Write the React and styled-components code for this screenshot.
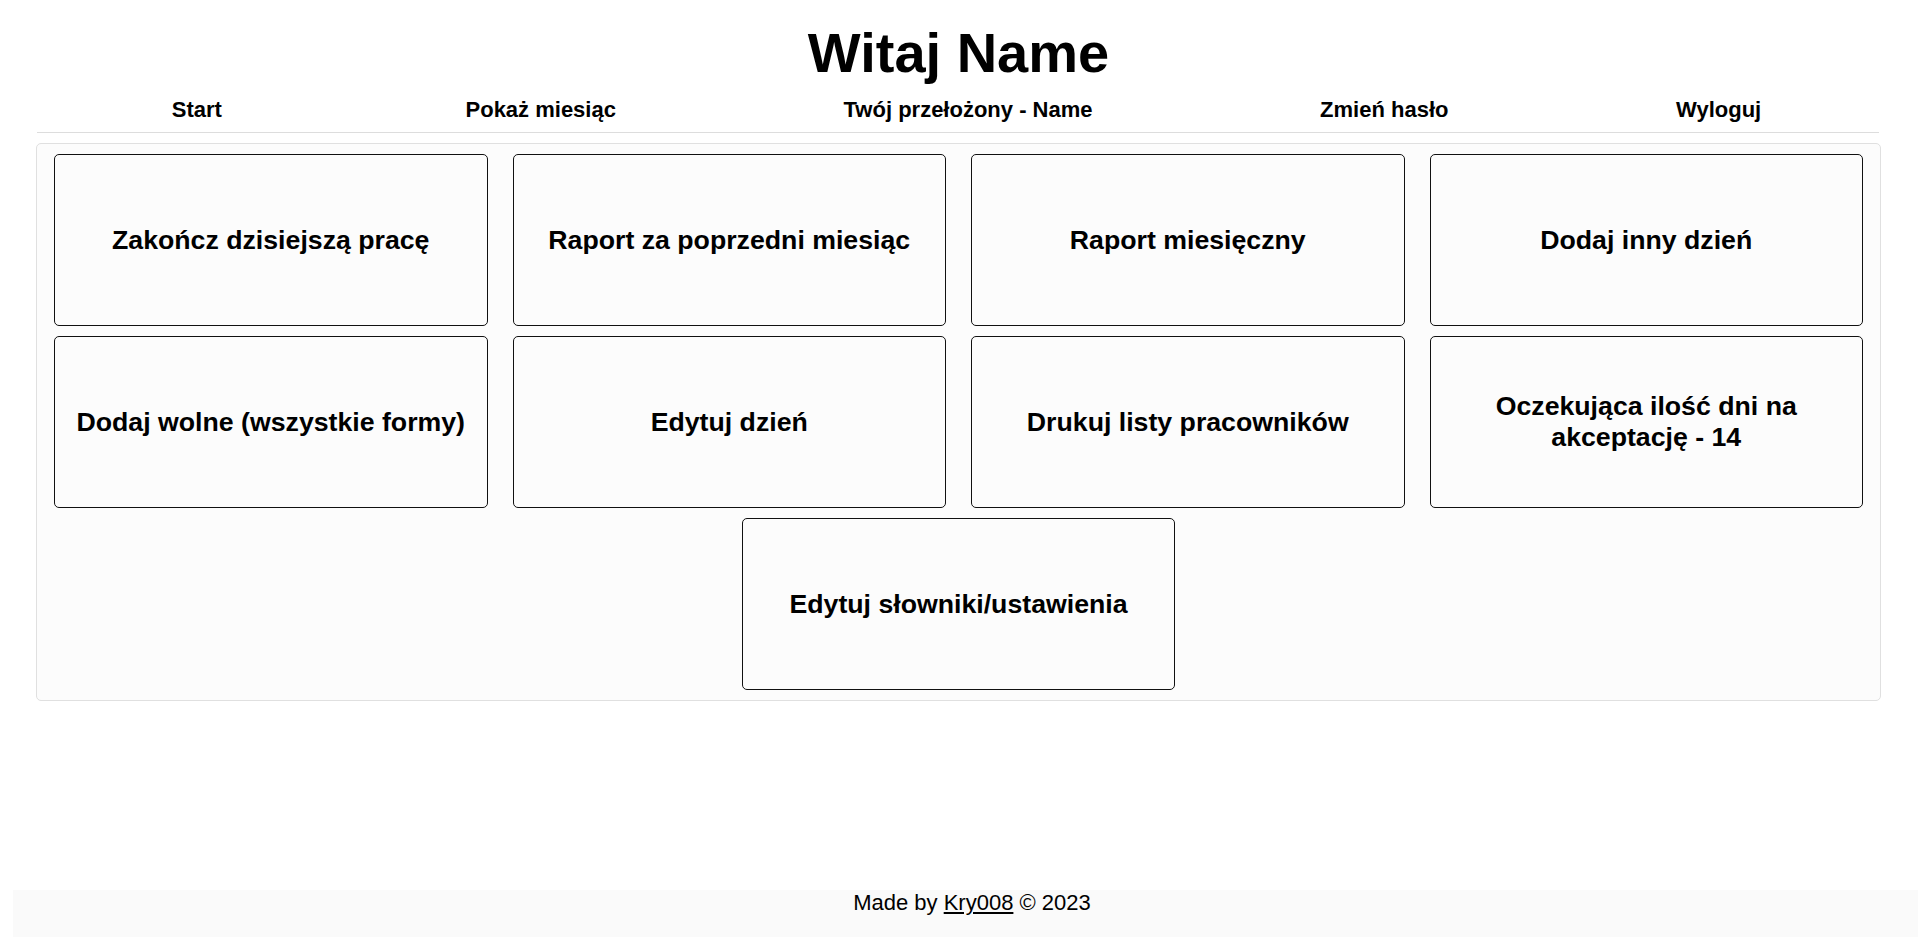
import React from 'react';
import styled, { createGlobalStyle } from 'styled-components';

const GlobalStyle = createGlobalStyle`
  html, body {
    margin: 0;
    padding: 0;
    background: #ffffff;
    color: #000000;
    font-family: "Liberation Sans", Arial, sans-serif;
  }
`;

const Page = styled.div`
  display: flex;
  flex-direction: column;
  min-height: 100vh;
  overflow-x: hidden;
`;

const Main = styled.main`
  padding: 0 37px 0 36px;
`;

const Title = styled.h1`
  margin: 0;
  padding-top: 20px;
  font-size: 56px;
  font-weight: 700;
  line-height: normal;
  text-align: center;
`;

const Nav = styled.nav`
  display: flex;
  justify-content: space-around;
  align-items: center;
  margin: 12px 2px 0 1px;
  padding: 0 4px 9px 21px;
  border-bottom: 1px solid #dddddd;
`;

const NavLink = styled.a`
  font-size: 22px;
  font-weight: 700;
  line-height: normal;
  color: #000000;
  text-decoration: none;
  cursor: pointer;
  margin-right: ${(p) => (p.$first ? '16px' : '0')};
`;

const Panel = styled.section`
  margin-top: 10px;
  padding: 10px 17px;
  background: #fcfcfc;
  border: 1px solid #e0e0e0;
  border-radius: 5px;
  display: flex;
  flex-wrap: wrap;
  justify-content: center;
  column-gap: 25px;
  row-gap: 10px;
`;

const Tile = styled.button`
  box-sizing: border-box;
  width: calc((100% - 75px) / 4);
  height: 172px;
  padding: 0 14px;
  display: flex;
  align-items: center;
  justify-content: center;
  text-align: center;
  background: #fcfcfc;
  border: 1px solid #111111;
  border-radius: 5px;
  font-family: "Liberation Sans", Arial, sans-serif;
  font-size: 26.7px;
  font-weight: 700;
  line-height: normal;
  color: #000000;
  cursor: pointer;
`;

const Footer = styled.footer`
  flex-shrink: 0;
  margin-top: auto;
  margin-left: 13px;
  width: 100%;
  padding-bottom: 21px;
  background: #fafafa;
  text-align: center;
  font-size: 22px;
  line-height: normal;
`;

const FooterLink = styled.a`
  color: #000000;
  text-decoration: underline;
`;

const navItems = ['Start', 'Pokaż miesiąc', 'Twój przełożony - Name', 'Zmień hasło', 'Wyloguj'];

const tiles = [
  'Zakończ dzisiejszą pracę',
  'Raport za poprzedni miesiąc',
  'Raport miesięczny',
  'Dodaj inny dzień',
  'Dodaj wolne (wszystkie formy)',
  'Edytuj dzień',
  'Drukuj listy pracowników',
  'Oczekująca ilość dni na akceptację - 14',
  'Edytuj słowniki/ustawienia',
];

export default function App() {
  return (
    <Page>
      <GlobalStyle />
      <Main>
        <Title>Witaj Name</Title>
        <Nav>
          {navItems.map((item, i) => (
            <NavLink key={item} $first={i === 0}>
              {item}
            </NavLink>
          ))}
        </Nav>
        <Panel>
          {tiles.map((label) => (
            <Tile key={label}>{label}</Tile>
          ))}
        </Panel>
      </Main>
      <Footer>
        Made by <FooterLink href="#">Kry008</FooterLink> © 2023
      </Footer>
    </Page>
  );
}
